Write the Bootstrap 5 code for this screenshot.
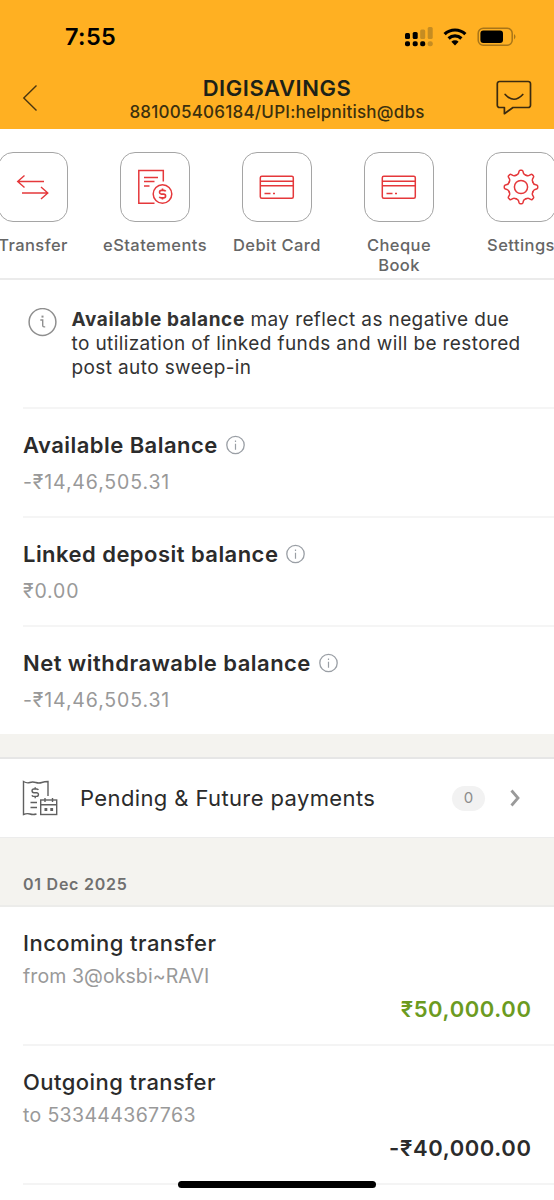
<!DOCTYPE html>
<html lang="en">
<head>
<meta charset="utf-8">
<meta name="viewport" content="width=device-width, initial-scale=1">
<title>DIGISAVINGS</title>
<link rel="stylesheet" href="https://cdn.jsdelivr.net/npm/bootstrap@5.3.0/dist/css/bootstrap.min.css">
<style>
  body { font-family: Inter, "Liberation Sans", sans-serif; color: #2b2b2b; height: 1200px; overflow: hidden; font-feature-settings: "calt" 0; }
  svg { display: block; fill: none; flex-shrink: 0; }
  .app-head { background: #ffb022; height: 129px; }
  .status-row { height: 74px; padding: 0 37px 0 65px; color: #000; }
  .clock { font-size: 23.5px; font-weight: 600; line-height: 74px; letter-spacing: .35px; }
  .title-row { height: 55px; padding: 1px 22px 0; }
  .acct-name { font-size: 22px; font-weight: 600; line-height: 27px; color: #1d2218; letter-spacing: .55px; }
  .acct-id { font-size: 17px; font-weight: 500; line-height: 20px; color: #3c300f; letter-spacing: .23px; }
  .quick-row { height: 151px; padding-top: 23px; border-bottom: 2px solid #ebebeb; }
  .quick-item { width: 122px; }
  .tile { width: 70px; height: 70px; border: 1.5px solid #a5a5a5; border-radius: 15px; color: #e5383b; }
  .quick-label { margin-top: 12.5px; font-size: 16.5px; font-weight: 500; line-height: 20px; color: #666; letter-spacing: .43px; }
  .notice { height: 127px; padding: 28px 0 0 28px; gap: 14.5px; }
  .notice-text { font-size: 19px; line-height: 23.8px; color: #333; letter-spacing: .39px; }
  .notice-text b { letter-spacing: .6px; }
  .line-row { margin-left: 23px; border-top: 2px solid #f5f5f5; height: 109px; padding-top: 20.5px; }
  .row-title { font-size: 22px; font-weight: 600; line-height: 30px; letter-spacing: .46px; }
  .row-value { font-size: 19.5px; line-height: 24px; color: #999; margin-top: 10.5px; letter-spacing: .87px; }
  .band { background: #f4f3ef; }
  .band-gap { height: 25px; border-bottom: 2px solid #e6e6e6; }
  .pending { height: 78px; padding: 0 33px 0 22px; }
  .pending-title { font-size: 22px; letter-spacing: .38px; margin-left: 22px; }
  .count { width: 33px; height: 25px; font-size: 15px; background: #f2f2f2; color: #8c8c8c; margin-right: 25px; }
  .date-band { height: 70px; padding: 34px 23px 0; border-top: 1px solid #ececec; border-bottom: 2px solid #ececea; font-size: 16px; font-weight: 600; line-height: 24px; color: #707070; letter-spacing: .75px; }
  .txn { margin-left: 23px; padding: 21px 23px 0 0; height: 139px; border-bottom: 2px solid #f4f4f4; }
  .txn-title { font-size: 22px; font-weight: 500; line-height: 30px; letter-spacing: .45px; }
  .txn-sub { font-size: 19.5px; line-height: 24px; color: #999; margin-top: 6px; letter-spacing: .08px; }
  .txn-sub.digits { letter-spacing: .35px; }
  .txn-amt { font-size: 22px; font-weight: 600; line-height: 28px; margin-top: 6.5px; margin-right: -.6px; text-align: right; letter-spacing: .6px; }
  .credit { color: #6c9b1f; }
  .home-bar { width: 198px; height: 7px; bottom: 12px; left: 50%; transform: translateX(-50%); background: #000; }
</style>
</head>
<body class="bg-white position-relative">

<header class="app-head">
  <div class="status-row d-flex align-items-center justify-content-between">
    <span class="clock">7:55</span>
    <div class="d-flex align-items-center">
      <svg width="28" height="20" viewBox="0 0 28 20">
        <g fill="#000">
          <rect x="0" y="6" width="5" height="6" rx="1.5"/><rect x="7.7" y="5" width="5" height="7" rx="1.5"/>
          <rect x="0" y="14.3" width="5" height="5" rx="1.8"/><rect x="7.7" y="14.3" width="5" height="5" rx="1.8"/><rect x="15.2" y="14.3" width="5" height="5" rx="1.8"/>
        </g>
        <g fill="#c58c22"><rect x="15.2" y="2.5" width="5" height="9.500" rx="1.5"/><rect x="22.7" y="0" width="5" height="12" rx="1.5"/><rect x="22.7" y="14.3" width="5" height="5" rx="2"/></g>
      </svg>
      <svg class="ms-2" width="28" height="20" viewBox="0 0 28 20">
        <g stroke="#000" stroke-width="3.2"><path d="M3.600 7.200a15 15 0 0 1 20.800 0"/><path d="M7.600 11.500a9.300 9.300 0 0 1 12.800 0"/></g>
        <path fill="#000" d="M10.400 14.700a5.200 5.200 0 0 1 7.200 0L14 18.400z"/>
      </svg>
      <svg class="ms-2" width="40" height="20" viewBox="0 0 40 20">
        <rect x="1.2" y="1.2" width="34" height="17" rx="5" stroke="#a87519" stroke-width="1.5"/>
        <rect x="3.4" y="3.4" width="22.6" height="12.6" rx="3" fill="#000"/>
        <path d="M37 7q3 2.700 0 5.400z" fill="#a87519"/>
      </svg>
    </div>
  </div>
  <div class="title-row d-flex justify-content-between">
    <svg class="mt-2" width="36" height="30" viewBox="0 0 36 30"><path d="M14.500 2.500L1.800 15 14.500 27.500" stroke="#4a3510" stroke-width="1.400"/></svg>
    <div class="text-center">
      <div class="acct-name">DIGISAVINGS</div>
      <div class="acct-id">881005406184/UPI:helpnitish@dbs</div>
    </div>
    <svg class="mt-1" width="36" height="40" viewBox="0 0 36 40">
      <path d="M3.500 2.500h28.800a2.200 2.200 0 0 1 2.200 2.200v21.600a2.200 2.200 0 0 1-2.200 2.200H17l-8.600 6.200v-6.200H3.500a2.200 2.200 0 0 1-2.200-2.200V4.700a2.200 2.200 0 0 1 2.200-2.200z" stroke="#3b2b10" stroke-width="1.700" stroke-linejoin="round"/>
      <path d="M9.200 15.500q8.700 9.500 17.600 0" stroke="#3b2b10" stroke-width="1.700" stroke-linecap="round"/>
    </svg>
  </div>
</header>

<nav class="quick-row d-flex justify-content-center overflow-hidden">
  <div class="quick-item flex-shrink-0 d-flex flex-column align-items-center">
    <div class="tile d-flex align-items-center justify-content-center">
      <svg width="36" height="36" viewBox="0 0 36 36" stroke="currentColor" stroke-width="1.400"><path d="M29 12.500H3M9.500 6.500L2.700 12.500l6.800 6M7 24h26M26 18l6.800 6-6.800 6"/></svg>
    </div>
    <span class="quick-label">Transfer</span>
  </div>
  <div class="quick-item flex-shrink-0 d-flex flex-column align-items-center">
    <div class="tile d-flex align-items-center justify-content-center">
      <svg width="36" height="36" viewBox="0 0 36 36" stroke="currentColor" stroke-width="1.500">
        <path d="M17.500 34.300H1.800V1.500h24.500v11M7 8.500h14M7 12.500h10.500M7 17h5.500"/>
        <circle cx="25.500" cy="25" r="9.300"/>
        <path d="M28.700 22.400q-.4-1-1.700-1h-2.600a1.800 1.800 0 0 0 0 3.700h2.300a1.900 1.900 0 0 1 0 3.800h-2.500q-1.400 0-1.800-1.100M25.500 19.600v1.800M25.500 28.900v1.700" stroke-width="1.600"/>
      </svg>
    </div>
    <span class="quick-label">eStatements</span>
  </div>
  <div class="quick-item flex-shrink-0 d-flex flex-column align-items-center">
    <div class="tile d-flex align-items-center justify-content-center">
      <svg width="36" height="36" viewBox="0 0 36 36" stroke="currentColor" stroke-width="1.500"><rect x="1.300" y="7.200" width="33" height="22" rx="1.500"/><path d="M1.300 12.300h33M1.300 16.800h33M5.500 24.600h6M14 24.600h2"/></svg>
    </div>
    <span class="quick-label">Debit Card</span>
  </div>
  <div class="quick-item flex-shrink-0 d-flex flex-column align-items-center">
    <div class="tile d-flex align-items-center justify-content-center">
      <svg width="36" height="36" viewBox="0 0 36 36" stroke="currentColor" stroke-width="1.500"><rect x="1.300" y="7.200" width="33" height="22" rx="1.500"/><path d="M1.300 12.300h33M1.300 16.800h33M5.500 24.600h6M14 24.600h2"/></svg>
    </div>
    <span class="quick-label text-center">Cheque<br>Book</span>
  </div>
  <div class="quick-item flex-shrink-0 d-flex flex-column align-items-center">
    <div class="tile d-flex align-items-center justify-content-center">
      <svg width="36" height="36" viewBox="-18 -18 36 36" stroke="currentColor" stroke-width="1.500" stroke-linecap="round">
        <defs><path id="tooth" d="M-4.900 -11.800C-3.400 -12.400 -2.700 -12.700 -2.400 -14L-2 -15.600Q-1.700 -16.700 -.8 -16.700H.8Q1.700 -16.700 2 -15.600L2.400 -14C2.700 -12.700 3.400 -12.400 4.900 -11.800"/></defs>
        <use href="#tooth"/><use href="#tooth" transform="rotate(45)"/><use href="#tooth" transform="rotate(90)"/><use href="#tooth" transform="rotate(135)"/><use href="#tooth" transform="rotate(180)"/><use href="#tooth" transform="rotate(225)"/><use href="#tooth" transform="rotate(270)"/><use href="#tooth" transform="rotate(315)"/>
        <circle r="6.600"/>
      </svg>
    </div>
    <span class="quick-label">Settings</span>
  </div>
</nav>

<main>
  <section class="notice d-flex">
    <svg width="29" height="29" viewBox="0 0 29 29" stroke="#8f8f8f"><circle cx="14.500" cy="14" r="13.400" stroke-width="1.500"/><path d="M12.300 12h2.400v5.600q0 1.300 1.300 1.300h1.200" stroke-width="1.400"/><path d="M13.500 8.600h2" stroke-width="2"/></svg>
    <div class="notice-text"><b>Available balance</b> may reflect as negative due<br>to utilization of linked funds and will be restored<br>post auto sweep-in</div>
  </section>

  <section class="line-row">
    <div class="row-title d-flex align-items-center gap-2"><span>Available Balance</span>
      <svg width="20" height="20" viewBox="0 0 20 20" stroke="#9a9fa5"><circle cx="9.500" cy="10" r="8.700" stroke-width="1.300"/><path d="M9.500 8.700v6M9.500 5.500v1.500" stroke-width="1.200"/></svg></div>
    <div class="row-value">-₹14,46,505.31</div>
  </section>
  <section class="line-row">
    <div class="row-title d-flex align-items-center gap-2"><span>Linked deposit balance</span>
      <svg width="20" height="20" viewBox="0 0 20 20" stroke="#9a9fa5"><circle cx="9.500" cy="10" r="8.700" stroke-width="1.300"/><path d="M9.500 8.700v6M9.500 5.500v1.500" stroke-width="1.200"/></svg></div>
    <div class="row-value">₹0.00</div>
  </section>
  <section class="line-row">
    <div class="row-title d-flex align-items-center gap-2"><span>Net withdrawable balance</span>
      <svg width="20" height="20" viewBox="0 0 20 20" stroke="#9a9fa5"><circle cx="9.500" cy="10" r="8.700" stroke-width="1.300"/><path d="M9.500 8.700v6M9.500 5.500v1.500" stroke-width="1.200"/></svg></div>
    <div class="row-value">-₹14,46,505.31</div>
  </section>

  <div class="band band-gap"></div>
  <section class="pending d-flex align-items-center">
    <svg width="36" height="36" viewBox="0 0 36 36" stroke="#606060" stroke-width="1.400">
      <path d="M14.500 34q-3.500 1-6.500 0T1.500 34.500V1.500q3.500 2 6.300 1t6 0 6 0 6.200-1V16"/>
      <path d="M16.300 10q-.3-1-1.500-1h-2.900a1.800 1.800 0 0 0 0 3.700h2.700a1.800 1.800 0 0 1 0 3.700h-3q-1.300 0-1.600-1.100M13.200 7.300v1.700M13.200 16.400v1.900M8.500 22.500h6.500M8.500 27.500h6.500"/>
      <rect x="18.700" y="20" width="16" height="14.500"/><path d="M18.700 24.800h16M23 18v4M30.500 18v4"/>
      <path d="M22.500 29.500h2.800M28.300 29.500h2.800" stroke-width="2.800"/>
    </svg>
    <span class="pending-title">Pending &amp; Future payments</span>
    <span class="count rounded-pill d-flex align-items-center justify-content-center ms-auto">0</span>
    <svg width="11" height="18" viewBox="0 0 11 18"><path d="M1.500 1.500L8 9l-6.500 7.500" stroke="#9a9a9a" stroke-width="2.800"/></svg>
  </section>
  <div class="band date-band">01 Dec 2025</div>

  <section class="txn">
    <div class="txn-title">Incoming transfer</div>
    <div class="txn-sub">from 3@oksbi~RAVI</div>
    <div class="txn-amt credit">₹50,000.00</div>
  </section>
  <section class="txn">
    <div class="txn-title">Outgoing transfer</div>
    <div class="txn-sub digits">to 533444367763</div>
    <div class="txn-amt">-₹40,000.00</div>
  </section>
</main>

<div class="home-bar position-absolute rounded-pill"></div>
<script src="https://cdn.jsdelivr.net/npm/bootstrap@5.3.0/dist/js/bootstrap.bundle.min.js"></script>
</body>
</html>
